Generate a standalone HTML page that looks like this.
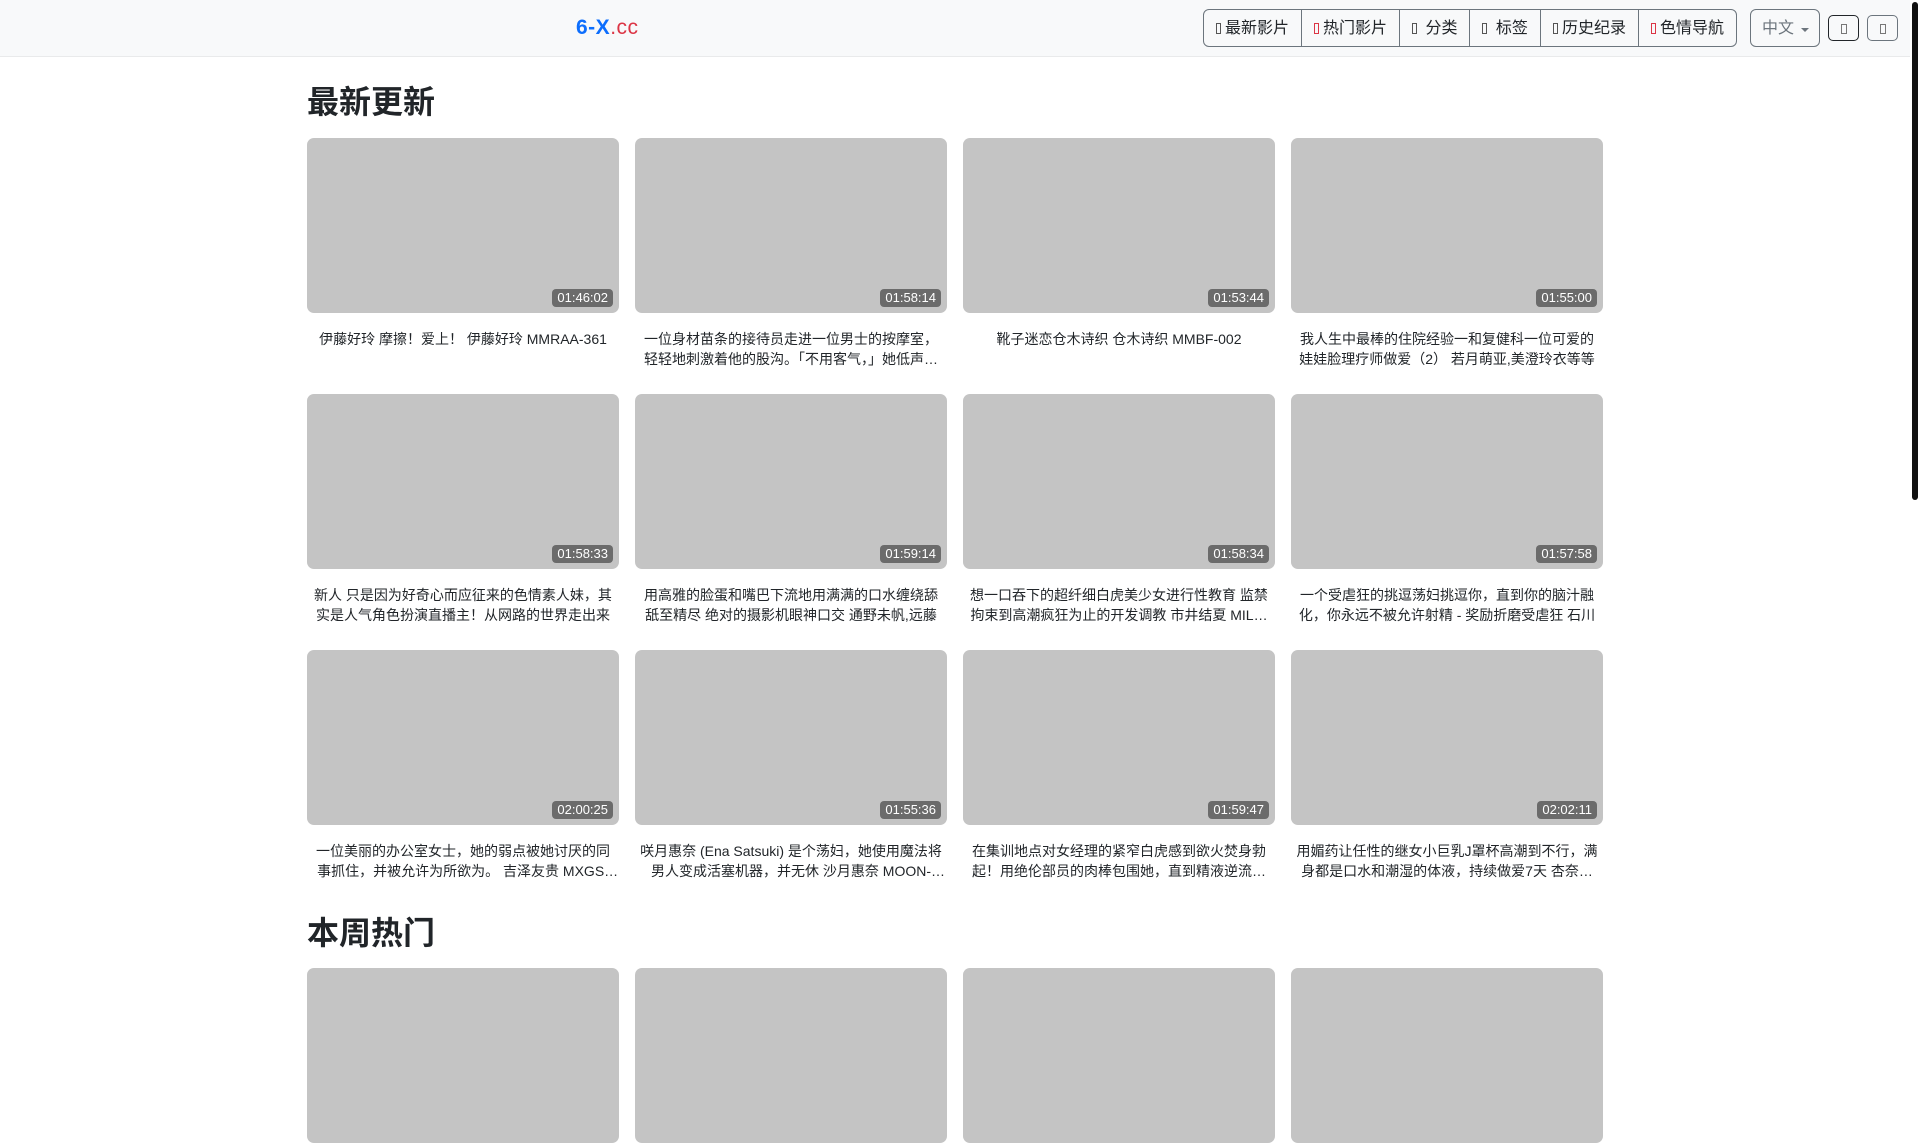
<!DOCTYPE html>
<html><head><meta charset="utf-8">
<style>
*{box-sizing:border-box;margin:0;padding:0}
html,body{width:1920px;height:1080px;overflow:hidden;background:#fff;font-family:"Liberation Sans","Noto Sans CJK SC",sans-serif;color:#212529}
.nav{position:absolute;left:0;top:0;width:1910px;height:57px;background:#f8f9fa;border-bottom:1px solid #e9eaeb}
.logo{position:absolute;left:576px;top:16px;font-size:21px;font-weight:bold;color:#0d6efd;letter-spacing:.5px}
.logo span{color:#dc3545;font-weight:normal}
.grp{position:absolute;left:1203px;top:9px;height:38px;display:flex;border:1px solid #6c757d;border-radius:6px;overflow:hidden}
.grp div{height:36px;line-height:38px;font-size:16px;padding:0 12px;border-left:1px solid #6c757d;white-space:nowrap}
.grp div:first-child{border-left:none}
.tf{display:inline-block;width:5px;height:11px;border:1px solid #555;margin-right:4px;vertical-align:-1px}
.tf.r{border-color:#dc3545}
.lang{position:absolute;left:1750px;top:9px;width:70px;height:38px;border:1px solid #6c757d;border-radius:6px;font-size:16px;line-height:38px;color:#6c757d;padding-left:11px}
.lang:after{content:"";position:absolute;left:50px;top:18px;border:4px solid transparent;border-top-color:#6c757d}
.sb{position:absolute;top:15px;width:31px;height:26px;border:1px solid #212529;border-radius:5px}
.sb:after{content:"";position:absolute;left:12px;top:8px;width:4px;height:8px;border:1px solid #777}
.scroll{position:absolute;left:1912px;top:2px;width:6px;height:498px;background:#111;border-radius:3px}
.wrap{position:absolute;left:307px;width:1296px}
h2{font-size:32px;font-weight:bold;line-height:38px;position:absolute;left:0}
.row{position:absolute;left:0;display:flex;gap:16px}
.card{width:312px}
.th{position:relative;height:175px;background:#c4c4c4;border-radius:7px}
.du{position:absolute;right:6px;bottom:6px;background:#6b6b6b;color:#fff;font-size:13px;line-height:18px;padding:0 5px;border-radius:4px}
.t{margin-top:16px;font-size:14px;line-height:20px;text-align:center;padding:0 5px;display:-webkit-box;-webkit-line-clamp:2;-webkit-box-orient:vertical;overflow:hidden;height:40px}
</style></head><body>
<div class="nav">
<div class="logo">6-X<span>.cc</span></div>
<div class="grp">
<div><i class="tf"></i>最新影片</div>
<div><i class="tf r"></i>热门影片</div>
<div><i class="tf"></i> 分类</div>
<div><i class="tf"></i> 标签</div>
<div><i class="tf"></i>历史纪录</div>
<div><i class="tf r"></i>色情导航</div>
</div>
<div class="lang">中文</div>
<div class="sb" style="left:1828px"></div>
<div class="sb" style="left:1867px;border-color:#6c757d"></div>
</div>
<div class="scroll"></div>
<div class="wrap">
<h2 style="top:83px">最新更新</h2>
<div class="row" style="top:138px">
<div class="card"><div class="th"><span class="du">01:46:02</span></div><div class="t">伊藤好玲 摩擦！爱上！ 伊藤好玲 MMRAA-361</div></div>
<div class="card"><div class="th"><span class="du">01:58:14</span></div><div class="t">一位身材苗条的接待员走进一位男士的按摩室，轻轻地刺激着他的股沟。「不用客气，」她低声说道</div></div>
<div class="card"><div class="th"><span class="du">01:53:44</span></div><div class="t">靴子迷恋仓木诗织 仓木诗织 MMBF-002</div></div>
<div class="card"><div class="th"><span class="du">01:55:00</span></div><div class="t">我人生中最棒的住院经验一和复健科一位可爱的娃娃脸理疗师做爱（2） 若月萌亚,美澄玲衣等等</div></div>
</div>
<div class="row" style="top:394px">
<div class="card"><div class="th"><span class="du">01:58:33</span></div><div class="t">新人 只是因为好奇心而应征来的色情素人妹，其实是人气角色扮演直播主！从网路的世界走出来</div></div>
<div class="card"><div class="th"><span class="du">01:59:14</span></div><div class="t">用高雅的脸蛋和嘴巴下流地用满满的口水缠绕舔舐至精尽 绝对的摄影机眼神口交 通野未帆,远藤</div></div>
<div class="card"><div class="th"><span class="du">01:58:34</span></div><div class="t">想一口吞下的超纤细白虎美少女进行性教育 监禁拘束到高潮疯狂为止的开发调教 市井结夏 MILK-123</div></div>
<div class="card"><div class="th"><span class="du">01:57:58</span></div><div class="t">一个受虐狂的挑逗荡妇挑逗你，直到你的脑汁融化，你永远不被允许射精 - 奖励折磨受虐狂 石川</div></div>
</div>
<div class="row" style="top:650px">
<div class="card"><div class="th"><span class="du">02:00:25</span></div><div class="t">一位美丽的办公室女士，她的弱点被她讨厌的同事抓住，并被允许为所欲为。 吉泽友贵 MXGS-1234</div></div>
<div class="card"><div class="th"><span class="du">01:55:36</span></div><div class="t">咲月惠奈 (Ena Satsuki) 是个荡妇，她使用魔法将男人变成活塞机器，并无休 沙月惠奈 MOON-001</div></div>
<div class="card"><div class="th"><span class="du">01:59:47</span></div><div class="t">在集训地点对女经理的紧窄白虎感到欲火焚身勃起！用绝伦部员的肉棒包围她，直到精液逆流而出</div></div>
<div class="card"><div class="th"><span class="du">02:02:11</span></div><div class="t">用媚药让任性的继女小巨乳J罩杯高潮到不行，满身都是口水和潮湿的体液，持续做爱7天 杏奈等等</div></div>
</div>
<h2 style="top:914px">本周热门</h2>
<div class="row" style="top:968px">
<div class="card"><div class="th"></div></div>
<div class="card"><div class="th"></div></div>
<div class="card"><div class="th"></div></div>
<div class="card"><div class="th"></div></div>
</div>
</div>
</body></html>
